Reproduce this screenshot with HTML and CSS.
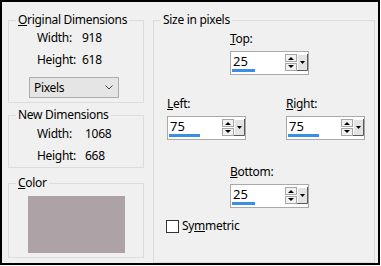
FILE: index.html
```html
<!DOCTYPE html>
<html lang="en">
<head>
  <meta charset="UTF-8">
  <title>Add Borders</title>
  <link rel="stylesheet" href="styles.css">
</head>
<body>
  <div class="dialog">
    <div class="left-col">
      <fieldset class="group">
        <legend><u>O</u>riginal Dimensions</legend>
        <div class="group-body body-orig">
          <div class="dim-row"><span>Width:</span><span>918</span></div>
          <div class="dim-row"><span>Height:</span><span>618</span></div>
          <div class="combo">
            <span>Pixels</span>
            <svg width="8" height="5" viewBox="0 0 8 5"><polyline points="0.5,0.5 4,4 7.5,0.5" fill="none" stroke="#444" stroke-width="1"/></svg>
          </div>
        </div>
      </fieldset>

      <fieldset class="group group-new">
        <legend>New Dimensions</legend>
        <div class="group-body body-new">
          <div class="dim-row wide"><span>Width:</span><span>1068</span></div>
          <div class="dim-row wide"><span>Height:</span><span>668</span></div>
        </div>
      </fieldset>

      <fieldset class="group group-color">
        <legend><u>C</u>olor</legend>
        <div class="group-body body-color">
          <div class="swatch"></div>
        </div>
      </fieldset>
    </div>

    <fieldset class="group group-size">
      <legend>Size in pixels</legend>
      <div class="group-body body-size">

        <div class="spin spin-center">
          <div class="spin-label"><u>T</u>op:</div>
          <div class="spin-box">
            <div class="spin-value"><span>25</span><div class="spin-bar" style="width:23px"></div></div>
            <svg class="spin-arrows" width="12" height="17" viewBox="0 0 12 17">
              <rect x="0.5" y="0.5" width="11" height="7" fill="#f2f2f2" stroke="#a6a6a6"/>
              <path d="M3 6h6L6 3z" fill="#000"/>
              <rect x="0.5" y="9.5" width="11" height="7" fill="#f2f2f2" stroke="#a6a6a6"/>
              <path d="M3 11h6l-3 3z" fill="#000"/>
            </svg>
            <svg class="spin-drop" width="11" height="17" viewBox="0 0 11 17">
              <rect x="0" y="0" width="11" height="17" fill="#e3e3e3"/>
              <path d="M0.5 16.5V0.5h10" fill="none" stroke="#fff"/>
              <path d="M10.5 0v16.5H0" fill="none" stroke="#5a5a5a"/>
              <path d="M3 7h5l-2.5 3z" fill="#000"/>
            </svg>
          </div>
        </div>

        <div class="spin-pair">
          <div class="spin">
            <div class="spin-label"><u>L</u>eft:</div>
            <div class="spin-box">
              <div class="spin-value"><span>75</span><div class="spin-bar" style="width:31px"></div></div>
              <svg class="spin-arrows" width="12" height="17" viewBox="0 0 12 17">
                <rect x="0.5" y="0.5" width="11" height="7" fill="#f2f2f2" stroke="#a6a6a6"/>
                <path d="M3 6h6L6 3z" fill="#000"/>
                <rect x="0.5" y="9.5" width="11" height="7" fill="#f2f2f2" stroke="#a6a6a6"/>
                <path d="M3 11h6l-3 3z" fill="#000"/>
              </svg>
              <svg class="spin-drop" width="11" height="17" viewBox="0 0 11 17">
                <rect x="0" y="0" width="11" height="17" fill="#e3e3e3"/>
                <path d="M0.5 16.5V0.5h10" fill="none" stroke="#fff"/>
                <path d="M10.5 0v16.5H0" fill="none" stroke="#5a5a5a"/>
                <path d="M3 7h5l-2.5 3z" fill="#000"/>
              </svg>
            </div>
          </div>
          <div class="spin">
            <div class="spin-label"><u>R</u>ight:</div>
            <div class="spin-box">
              <div class="spin-value"><span>75</span><div class="spin-bar" style="width:31px"></div></div>
              <svg class="spin-arrows" width="12" height="17" viewBox="0 0 12 17">
                <rect x="0.5" y="0.5" width="11" height="7" fill="#f2f2f2" stroke="#a6a6a6"/>
                <path d="M3 6h6L6 3z" fill="#000"/>
                <rect x="0.5" y="9.5" width="11" height="7" fill="#f2f2f2" stroke="#a6a6a6"/>
                <path d="M3 11h6l-3 3z" fill="#000"/>
              </svg>
              <svg class="spin-drop" width="11" height="17" viewBox="0 0 11 17">
                <rect x="0" y="0" width="11" height="17" fill="#e3e3e3"/>
                <path d="M0.5 16.5V0.5h10" fill="none" stroke="#fff"/>
                <path d="M10.5 0v16.5H0" fill="none" stroke="#5a5a5a"/>
                <path d="M3 7h5l-2.5 3z" fill="#000"/>
              </svg>
            </div>
          </div>
        </div>

        <div class="spin spin-center spin-bottom">
          <div class="spin-label"><u>B</u>ottom:</div>
          <div class="spin-box">
            <div class="spin-value"><span>25</span><div class="spin-bar" style="width:23px"></div></div>
            <svg class="spin-arrows" width="12" height="17" viewBox="0 0 12 17">
              <rect x="0.5" y="0.5" width="11" height="7" fill="#f2f2f2" stroke="#a6a6a6"/>
              <path d="M3 6h6L6 3z" fill="#000"/>
              <rect x="0.5" y="9.5" width="11" height="7" fill="#f2f2f2" stroke="#a6a6a6"/>
              <path d="M3 11h6l-3 3z" fill="#000"/>
            </svg>
            <svg class="spin-drop" width="11" height="17" viewBox="0 0 11 17">
              <rect x="0" y="0" width="11" height="17" fill="#e3e3e3"/>
              <path d="M0.5 16.5V0.5h10" fill="none" stroke="#fff"/>
              <path d="M10.5 0v16.5H0" fill="none" stroke="#5a5a5a"/>
              <path d="M3 7h5l-2.5 3z" fill="#000"/>
            </svg>
          </div>
        </div>

        <div class="check-row">
          <span class="checkbox"></span>
          <span>Sy<u>m</u>metric</span>
        </div>
      </div>
    </fieldset>
  </div>
</body>
</html>
```

FILE: styles.css
```css
body {
  margin: 0;
  background-color: #fff;
  font-family: "Noto Sans", "Open Sans", sans-serif;
  font-size: 12px;
  letter-spacing: -0.3px;
  color: #000;
}
.dialog {
  width: 380px;
  height: 265px;
  box-sizing: border-box;
  border: 2px solid #000;
  background-color: #f0f0f0;
  display: flex;
  gap: 9px;
  padding: 10px 3px 0 6px;
}
.left-col {
  width: 136px;
  display: flex;
  flex-direction: column;
}
.group {
  margin: 0;
  padding: 0;
  min-width: 0;
  border: 1px solid #dcdcdc;
}
.group legend {
  margin-left: 7px;
  padding: 0 2px;
  line-height: 16px;
  white-space: nowrap;
}
.group-new {
  margin-top: 4px;
}
.group-color {
  margin-top: 7px;
}
.body-orig {
  padding: 0 0 4px 20px;
}
.body-new {
  padding: 1px 0 1px 20px;
}
.body-color {
  padding: 5px 0 4px 19px;
}
.dim-row {
  display: grid;
  grid-template-columns: 45px auto;
  padding-left: 8px;
  line-height: 20px;
}
.dim-row + .dim-row {
  margin-top: 2px;
}
.dim-row.wide {
  grid-template-columns: 48px auto;
}
.combo {
  width: 90px;
  height: 21px;
  box-sizing: border-box;
  margin-top: 7px;
  padding: 0 5px 0 4px;
  border: 1px solid #adadad;
  background-color: #e5e5e5;
  display: flex;
  align-items: center;
  justify-content: space-between;
}
.swatch {
  width: 97px;
  height: 57px;
  background-color: #ada3a6;
}
.group-size {
  flex: 1;
}
.body-size {
  padding: 3px 9px 24px 13px;
}
.spin-label {
  line-height: 16px;
  margin-bottom: 4px;
}
.spin-center {
  margin-left: 63px;
}
.spin-pair {
  display: flex;
  justify-content: space-between;
  margin-top: 21px;
}
.spin-bottom {
  margin-top: 24px;
}
.spin-box {
  width: 79px;
  height: 24px;
  box-sizing: border-box;
  border: 1px solid #a9a9a9;
  background-color: #fff;
  display: flex;
  align-items: flex-start;
}
.spin-value {
  flex: 1;
  padding: 1px 0 0 2px;
  font-size: 13px;
  line-height: 16px;
  letter-spacing: 0;
}
.spin-bar {
  height: 3px;
  margin-left: -1px;
  background-color: #3b8ee6;
}
.spin-arrows,
.spin-drop {
  display: block;
  margin-top: 2px;
}
.check-row {
  display: flex;
  align-items: center;
  gap: 3px;
  margin-top: 10px;
  margin-left: -1px;
  line-height: 16px;
}
.checkbox {
  width: 13px;
  height: 13px;
  box-sizing: border-box;
  border: 1px solid #333;
  background-color: #fff;
}
```
